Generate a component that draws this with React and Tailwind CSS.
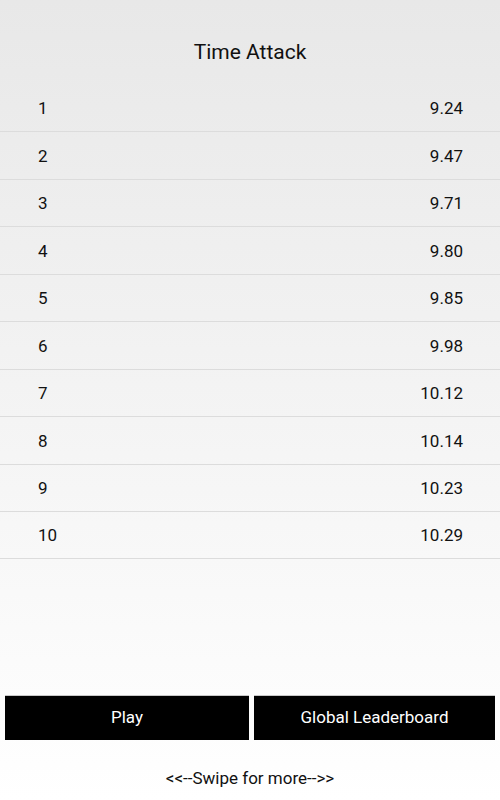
import React from 'react';

const scores = ['9.24', '9.47', '9.71', '9.80', '9.85', '9.98', '10.12', '10.14', '10.23', '10.29'];

export default function App() {
  return (
    <div
      className="flex flex-col h-[800px] w-[500px] bg-gradient-to-b from-[#e8e8e8] to-white text-[#111] font-['Roboto',sans-serif]"
    >
      {/* Title */}
      <div className="h-[85px] flex items-center justify-center pt-[20px] text-[21px]">Time Attack</div>

      {/* Score rows */}
      <div className="flex flex-col">
        {scores.map((score, i) => (
          <div
            key={i}
            className="h-[47.45px] flex items-center justify-between pt-[2px] pl-[38px] pr-[37px] border-b border-[#dcdcdc] text-[17px]"
          >
            <span>{i + 1}</span>
            <span>{score}</span>
          </div>
        ))}
      </div>

      <div className="flex-1" />

      {/* Buttons */}
      <div className="flex gap-[5px] px-[5px]">
        <button className="flex-1 h-[45px] bg-black text-white text-[17px] border-t border-[#c8c8c8]">Play</button>
        <button className="w-[241px] h-[45px] bg-black text-white text-[17px] border-t border-[#c8c8c8]">
          Global Leaderboard
        </button>
      </div>

      <div className="h-[60px] flex items-center justify-center pt-[17px] text-[17px]">
        &lt;&lt;--Swipe for more--&gt;&gt;
      </div>
    </div>
  );
}
